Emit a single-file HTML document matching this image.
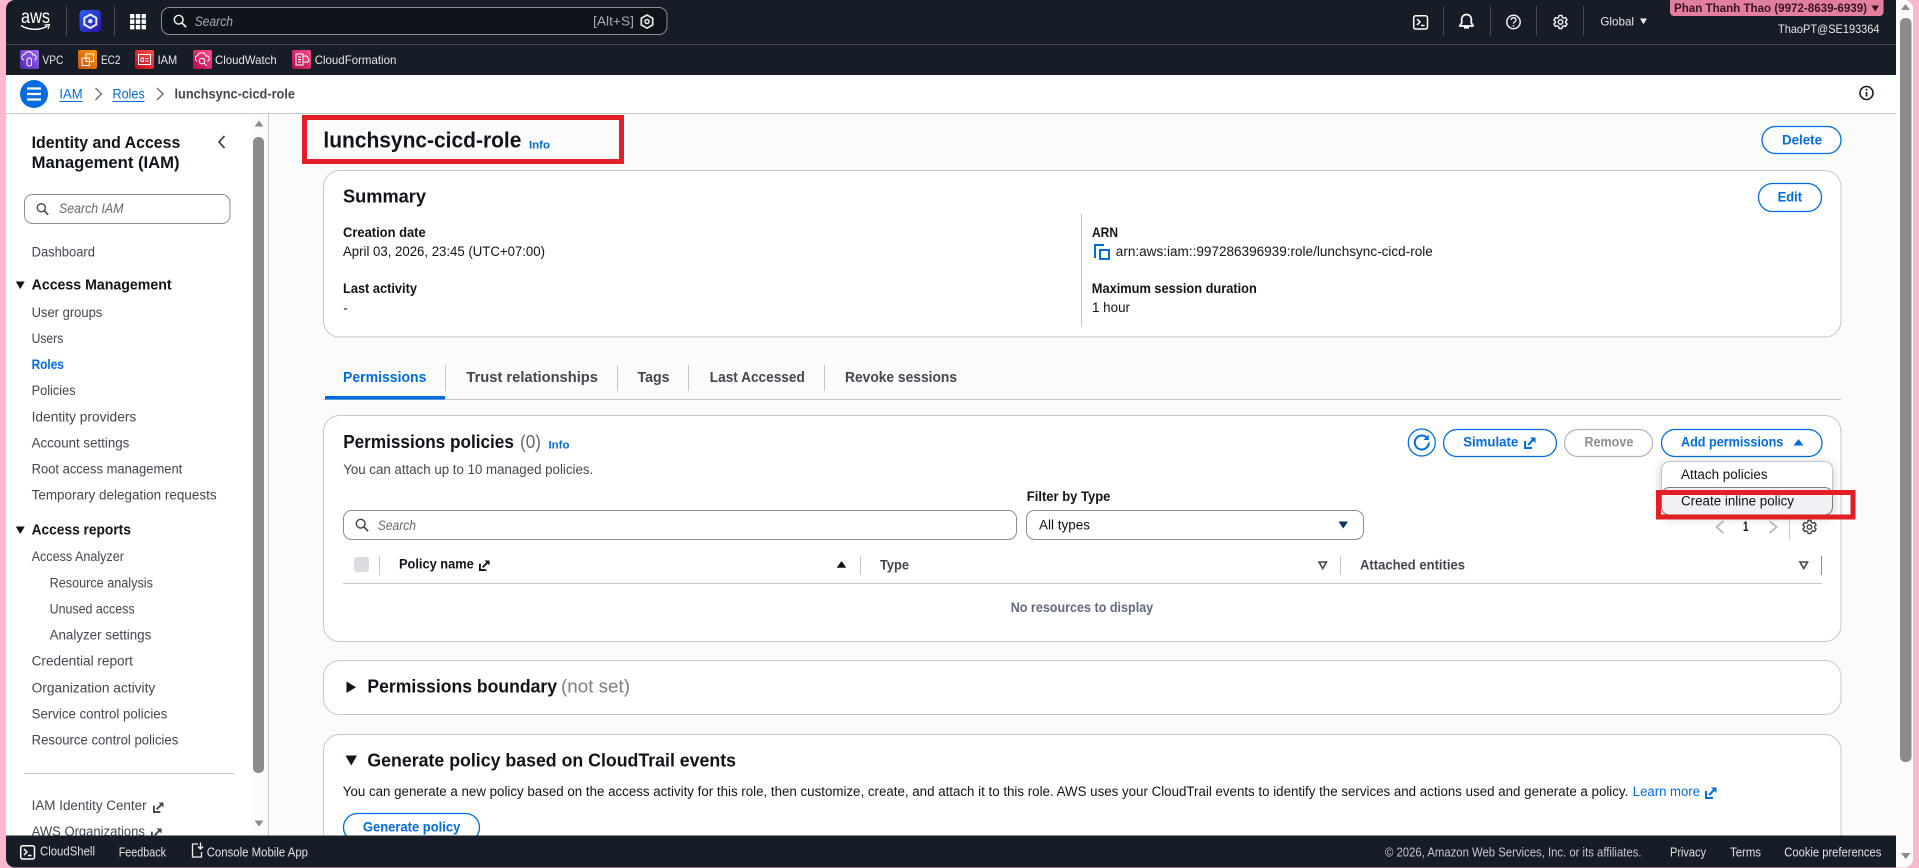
<!DOCTYPE html>
<html lang="en"><head><meta charset="utf-8"><title>lunchsync-cicd-role - IAM</title>
<style>
html,body{margin:0;padding:0;width:1919px;height:868px;overflow:hidden;background:#ffb6cf}
svg{display:block}
text{font-family:"Liberation Sans",Arial,sans-serif;font-size:13.5px;fill:#0f141a;white-space:pre}
.s{fill:#424650}
.b{font-weight:700}
.l{fill:#006ce0}
.h{font-size:18.5px;font-weight:700}
.n{font-size:12px;fill:#e6e6ea}
.g{fill:#5f6b7a}
.f{font-size:12.5px;fill:#dfe0e4}
.i{font-style:italic}
.ln{fill:none;stroke:#c6c6cd;stroke-width:1}
.card{fill:#fff;stroke:#c6c6cd;stroke-width:1}
.btn{fill:#fff;stroke:#006ce0;stroke-width:1.3}
</style></head><body>
<svg xmlns="http://www.w3.org/2000/svg" width="1919" height="868" viewBox="0 0 1919 868">
<defs>
<symbol id="ext" viewBox="0 0 12 12" overflow="visible"><path d="M1 4v7h7" fill="none" stroke="currentColor" stroke-width="2"/><path d="M4 8L10 2" fill="none" stroke="currentColor" stroke-width="2"/><path d="M6 .5h5.5V6z" fill="currentColor"/></symbol>
<symbol id="gear" viewBox="0 0 16 16" overflow="visible"><path d="M6.5 1h3l.4 2 1.7 1 1.9-.7 1.5 2.6-1.5 1.3v1.6l1.5 1.3-1.5 2.6-1.9-.7-1.7 1-.4 2h-3l-.4-2-1.7-1-1.9.7L1 10.1l1.5-1.3V7.2L1 5.9l1.5-2.6 1.9.7 1.7-1z" fill="none" stroke="currentColor" stroke-width="1.5" stroke-linejoin="round"/><circle cx="8" cy="8" r="2.4" fill="none" stroke="currentColor" stroke-width="1.5"/></symbol>
<symbol id="mag" viewBox="0 0 16 16" overflow="visible"><circle cx="6.5" cy="6.5" r="5" fill="none" stroke="currentColor" stroke-width="1.7"/><path d="M10.2 10.2L15 15" stroke="currentColor" stroke-width="1.9" fill="none"/></symbol>
<linearGradient id="gp" x1="0" y1="1" x2="1" y2="0"><stop offset="0" stop-color="#4d27aa"/><stop offset="1" stop-color="#a166ff"/></linearGradient>
<linearGradient id="go" x1="0" y1="1" x2="1" y2="0"><stop offset="0" stop-color="#c8511b"/><stop offset="1" stop-color="#ff9900"/></linearGradient>
<linearGradient id="gr" x1="0" y1="1" x2="1" y2="0"><stop offset="0" stop-color="#bd0816"/><stop offset="1" stop-color="#ff5252"/></linearGradient>
<linearGradient id="gk" x1="0" y1="1" x2="1" y2="0"><stop offset="0" stop-color="#b0084d"/><stop offset="1" stop-color="#ff4f8b"/></linearGradient>
<linearGradient id="gb" x1="0" y1="0" x2="1" y2="1"><stop offset="0" stop-color="#2a5ff0"/><stop offset="1" stop-color="#2a10a8"/></linearGradient>
<clipPath id="frame"><rect x="6" y="0" width="1907" height="867.5" rx="9"/></clipPath>
</defs>

<rect width="1919" height="868" fill="#ffb6cf"/>
<g clip-path="url(#frame)">
<rect x="6" y="0" width="1907" height="868" fill="#fcfcfd"/>

<!-- main -->
<rect x="269" y="114" width="1627" height="722" fill="#fbfbfc"/>

<!-- heading -->
<text x="323.4" y="147.7" style="font-size:22px;font-weight:700" textLength="198" lengthAdjust="spacingAndGlyphs">lunchsync-cicd-role</text>
<text x="529" y="148.3" class="l b" style="font-size:11px" textLength="21" lengthAdjust="spacingAndGlyphs">Info</text>
<rect x="1762" y="126.5" width="79" height="27" rx="13.5" class="btn"/>
<text x="1782" y="144.3" class="l b" textLength="40" lengthAdjust="spacingAndGlyphs">Delete</text>

<!-- summary card -->
<rect x="323.5" y="170.5" width="1517.5" height="166.5" rx="16" class="card"/>
<text x="343" y="202.7" class="h" textLength="83" lengthAdjust="spacingAndGlyphs">Summary</text>
<rect x="1758.5" y="183.5" width="63" height="28" rx="14" class="btn"/>
<text x="1777.6" y="201.3" class="l b" textLength="24.5" lengthAdjust="spacingAndGlyphs">Edit</text>
<text x="343" y="236.8" class="b" textLength="82.7" lengthAdjust="spacingAndGlyphs">Creation date</text>
<text x="343" y="256.2" textLength="202" lengthAdjust="spacingAndGlyphs">April 03, 2026, 23:45 (UTC+07:00)</text>
<text x="343" y="292.9" class="b" textLength="74" lengthAdjust="spacingAndGlyphs">Last activity</text>
<text x="343.3" y="312.6">-</text>
<path d="M1081.5 214v113" class="ln"/>
<text x="1092" y="236.8" class="b" textLength="26" lengthAdjust="spacingAndGlyphs">ARN</text>
<path d="M1095 258v-13h9" fill="none" stroke="#006ce0" stroke-width="2"/><rect x="1100" y="250" width="9" height="9" fill="none" stroke="#006ce0" stroke-width="2"/>
<text x="1115.8" y="256.2" textLength="317" lengthAdjust="spacingAndGlyphs">arn:aws:iam::997286396939:role/lunchsync-cicd-role</text>
<text x="1091.8" y="292.9" class="b" textLength="165" lengthAdjust="spacingAndGlyphs">Maximum session duration</text>
<text x="1092" y="312.2" textLength="38" lengthAdjust="spacingAndGlyphs">1 hour</text>

<!-- tabs -->
<text x="343" y="382.2" class="l b" style="font-size:14.5px" textLength="83.4" lengthAdjust="spacingAndGlyphs">Permissions</text>
<text x="466.4" y="382.2" class="s b" style="font-size:14.5px" textLength="131.6" lengthAdjust="spacingAndGlyphs">Trust relationships</text>
<text x="637.5" y="382.2" class="s b" style="font-size:14.5px" textLength="32" lengthAdjust="spacingAndGlyphs">Tags</text>
<text x="709.8" y="382.2" class="s b" style="font-size:14.5px" textLength="95" lengthAdjust="spacingAndGlyphs">Last Accessed</text>
<text x="845" y="382.2" class="s b" style="font-size:14.5px" textLength="112" lengthAdjust="spacingAndGlyphs">Revoke sessions</text>
<path d="M445.5 365v26M617.5 365v26M688.5 365v26M824.5 365v26" class="ln"/>
<path d="M323 399.5h1518" class="ln"/>
<rect x="325" y="396" width="120" height="3.5" fill="#006ce0"/>

<!-- permissions card -->
<rect x="323.5" y="415.5" width="1517.5" height="226" rx="16" class="card"/>
<text x="343.2" y="448" class="h" textLength="170.7" lengthAdjust="spacingAndGlyphs">Permissions policies</text>
<text x="520" y="448" class="s" style="font-size:18.5px;fill:#656871" textLength="21" lengthAdjust="spacingAndGlyphs">(0)</text>
<text x="548.5" y="448.3" class="l b" style="font-size:11px" textLength="21" lengthAdjust="spacingAndGlyphs">Info</text>
<text x="343.2" y="474" class="s" textLength="250" lengthAdjust="spacingAndGlyphs">You can attach up to 10 managed policies.</text>

<circle cx="1421.8" cy="442.5" r="13.5" fill="#fff" stroke="#006ce0" stroke-width="1.3"/>
<path d="M1427.3 438.2a7 7 0 1 0 1.5 4.3" fill="none" stroke="#006ce0" stroke-width="2"/><path d="M1428.8 434.6v5.4h-5.4z" fill="#006ce0"/>
<rect x="1443.5" y="429.5" width="113" height="27" rx="13.5" class="btn"/>
<text x="1463.2" y="446.7" class="l b" textLength="55" lengthAdjust="spacingAndGlyphs">Simulate</text>
<use href="#ext" x="1524" y="437" width="12" height="12" style="color:#006ce0"/>
<rect x="1564.5" y="429.5" width="88" height="27" rx="13.5" fill="#fff" stroke="#b4b4bb" stroke-width="1.2"/>
<text x="1584.5" y="446.7" class="b" style="fill:#8c8c94" textLength="48.8" lengthAdjust="spacingAndGlyphs">Remove</text>
<rect x="1661.5" y="429.5" width="160.5" height="27" rx="13.5" class="btn"/>
<text x="1681" y="446.7" class="l b" textLength="102.3" lengthAdjust="spacingAndGlyphs">Add permissions</text>
<path d="M1798.5 439l5 6.5h-10z" fill="#006ce0"/>

<rect x="343.5" y="510.5" width="673" height="29" rx="8" fill="#fff" stroke="#8c8c94" stroke-width="1"/>
<use href="#mag" x="355" y="518" width="14" height="14" style="color:#424650"/>
<text x="377.8" y="530" class="i" style="fill:#656871" textLength="38.2" lengthAdjust="spacingAndGlyphs">Search</text>
<text x="1026.8" y="501" class="b" textLength="83.6" lengthAdjust="spacingAndGlyphs">Filter by Type</text>
<rect x="1026.5" y="510.5" width="337" height="29" rx="8" fill="#fff" stroke="#8c8c94" stroke-width="1"/>
<text x="1039" y="529.3" textLength="51" lengthAdjust="spacingAndGlyphs">All types</text>
<path d="M1338.5 521.5h9.5l-4.75 7z" fill="#033160"/>

<!-- pagination -->
<path d="M1723.5 521l-7 6 7 6" fill="none" stroke="#b4b4bb" stroke-width="1.7"/>
<text x="1743" y="531" class="b" textLength="5.5" lengthAdjust="spacingAndGlyphs">1</text>
<path d="M1769.5 521l7 6-7 6" fill="none" stroke="#b4b4bb" stroke-width="1.7"/>
<path d="M1789.5 518v21" class="ln"/>
<use href="#gear" x="1802" y="519.5" width="15" height="15" style="color:#424650"/>

<!-- table header -->
<rect x="354" y="557" width="15" height="15" rx="3" fill="#dbdbe0"/>
<path d="M379.5 556v19M860.5 556v19M1340.5 556v19" class="ln"/>
<path d="M1821.5 556v19" fill="none" stroke="#8c8c94"/>
<text x="399" y="568.7" class="b" textLength="74.8" lengthAdjust="spacingAndGlyphs">Policy name</text>
<use href="#ext" x="479" y="560" width="11" height="11" style="color:#0f141a"/>
<path d="M841.5 561l4.8 6.8h-9.6z" fill="#0f141a"/>
<text x="880" y="569.3" class="s b" textLength="29" lengthAdjust="spacingAndGlyphs">Type</text>
<path d="M1319 562h7.5l-3.75 6.5z" fill="none" stroke="#424650" stroke-width="1.6"/>
<text x="1360" y="569.3" class="s b" textLength="105" lengthAdjust="spacingAndGlyphs">Attached entities</text>
<path d="M1800 562h7.5l-3.75 6.5z" fill="none" stroke="#424650" stroke-width="1.6"/>
<path d="M343 583.5h1479" class="ln"/>
<text x="1010.7" y="612" class="b g" textLength="142.5" lengthAdjust="spacingAndGlyphs">No resources to display</text>

<!-- boundary card -->
<rect x="323.5" y="660.5" width="1517.5" height="54" rx="16" class="card"/>
<path d="M346.5 681.5l9.5 5.7-9.5 5.7z" fill="#0f141a"/>
<text x="367.4" y="692.7" class="h" textLength="189.6" lengthAdjust="spacingAndGlyphs">Permissions boundary</text>
<text x="561" y="692.7" style="font-size:18.5px;fill:#7d7d85" textLength="69" lengthAdjust="spacingAndGlyphs">(not set)</text>

<!-- generate card -->
<rect x="323.5" y="734.5" width="1517.5" height="160" rx="16" class="card"/>
<path d="M345.5 755.5h11.5l-5.75 10z" fill="#0f141a"/>
<text x="367.4" y="766.7" class="h" textLength="368.6" lengthAdjust="spacingAndGlyphs">Generate policy based on CloudTrail events</text>
<text x="342.8" y="796" textLength="1285.5" lengthAdjust="spacingAndGlyphs">You can generate a new policy based on the access activity for this role, then customize, create, and attach it to this role. AWS uses your CloudTrail events to identify the services and actions used and generate a policy.</text>
<text x="1632.8" y="796" class="l" textLength="67.2" lengthAdjust="spacingAndGlyphs">Learn more</text>
<use href="#ext" x="1705" y="787" width="12" height="12" style="color:#006ce0"/>
<rect x="343.5" y="813.5" width="136" height="28" rx="14" class="btn"/>
<text x="362.9" y="831.7" class="l b" textLength="97.4" lengthAdjust="spacingAndGlyphs">Generate policy</text>

<!-- dropdown -->
<g style="filter:drop-shadow(0 2px 5px rgba(0,0,0,.22))"><rect x="1661.5" y="461.5" width="171" height="53.5" rx="8" fill="#fff" stroke="#c6c6cd"/></g>
<rect x="1661.5" y="487.5" width="171" height="27.5" rx="8" fill="#f0f0f5" stroke="#7d7d85"/>
<text x="1681" y="479" textLength="86.6" lengthAdjust="spacingAndGlyphs">Attach policies</text>
<text x="1681" y="505.3" textLength="113" lengthAdjust="spacingAndGlyphs">Create inline policy</text>

<!-- red highlight boxes -->
<rect x="304.5" y="117.5" width="317" height="44" fill="none" stroke="#e31e26" stroke-width="5"/>
<rect x="1658.5" y="492.5" width="194.5" height="24.500" fill="none" stroke="#e31e26" stroke-width="5"/>

<!-- sidebar -->
<rect x="6" y="114" width="262" height="722" fill="#fff"/>
<path d="M268.5 114v722" class="ln"/>
<rect x="251" y="114" width="17" height="722" fill="#fcfcfc"/>
<path d="M259 120.5l4.500 6h-9z" fill="#8c8c8c"/>
<rect x="253" y="137" width="11" height="636" rx="5" fill="#8c8c8c"/>
<path d="M254.5 820.5h9l-4.500 6z" fill="#8c8c8c"/>

<g transform="translate(-.4,-.5)">
<text x="32" y="148.7" style="font-size:16.5px;font-weight:700" textLength="148.7" lengthAdjust="spacingAndGlyphs">Identity and Access</text>
<text x="32" y="168.7" style="font-size:16.5px;font-weight:700" textLength="148" lengthAdjust="spacingAndGlyphs">Management (IAM)</text>
</g>
<path d="M224.5 136l-5.5 6 5.5 6" fill="none" stroke="#424650" stroke-width="1.7"/>
<rect x="24.5" y="194.5" width="205.5" height="29" rx="8" fill="#fff" stroke="#8c8c94"/>
<use href="#mag" x="36" y="202.5" width="13" height="13" style="color:#424650"/>
<text x="59" y="213" class="i" style="fill:#656871" textLength="64.5" lengthAdjust="spacingAndGlyphs">Search IAM</text>
<g transform="translate(-.4,-.5)">
<text x="32" y="257" class="s" textLength="63.3" lengthAdjust="spacingAndGlyphs">Dashboard</text>
<text x="32" y="290" class="b" style="font-size:14.5px" textLength="140" lengthAdjust="spacingAndGlyphs">Access Management</text>
<text x="32" y="317.5" class="s" textLength="70.7" lengthAdjust="spacingAndGlyphs">User groups</text>
<text x="32" y="343.3" class="s" textLength="31.7" lengthAdjust="spacingAndGlyphs">Users</text>
<text x="32" y="369.3" class="l b" textLength="32.3" lengthAdjust="spacingAndGlyphs">Roles</text>
<text x="32" y="395.3" class="s" textLength="44" lengthAdjust="spacingAndGlyphs">Policies</text>
<text x="32" y="422" class="s" textLength="104.7" lengthAdjust="spacingAndGlyphs">Identity providers</text>
<text x="32" y="448" class="s" textLength="97.7" lengthAdjust="spacingAndGlyphs">Account settings</text>
<text x="32" y="474" class="s" textLength="150.7" lengthAdjust="spacingAndGlyphs">Root access management</text>
<text x="32" y="500" class="s" textLength="185" lengthAdjust="spacingAndGlyphs">Temporary delegation requests</text>
<text x="32" y="535" class="b" style="font-size:14.5px" textLength="99.3" lengthAdjust="spacingAndGlyphs">Access reports</text>
<text x="32" y="561.3" class="s" textLength="92.3" lengthAdjust="spacingAndGlyphs">Access Analyzer</text>
<text x="50" y="588" class="s" textLength="103.3" lengthAdjust="spacingAndGlyphs">Resource analysis</text>
<text x="50" y="614" class="s" textLength="85" lengthAdjust="spacingAndGlyphs">Unused access</text>
<text x="50" y="640" class="s" textLength="101.7" lengthAdjust="spacingAndGlyphs">Analyzer settings</text>
<text x="32" y="666" class="s" textLength="101.3" lengthAdjust="spacingAndGlyphs">Credential report</text>
<text x="32" y="693" class="s" textLength="123.7" lengthAdjust="spacingAndGlyphs">Organization activity</text>
<text x="32" y="719" class="s" textLength="135.7" lengthAdjust="spacingAndGlyphs">Service control policies</text>
<text x="32" y="745" class="s" textLength="146.7" lengthAdjust="spacingAndGlyphs">Resource control policies</text>
<text x="32" y="810.7" class="s" textLength="115" lengthAdjust="spacingAndGlyphs">IAM Identity Center</text>
<text x="32" y="836.5" class="s" textLength="113.3" lengthAdjust="spacingAndGlyphs">AWS Organizations</text>
</g>
<path d="M15.8 281.5h8.900l-4.450 7.5zM15.8 526.5h8.900l-4.450 7.5z" fill="#0f141a"/>
<path d="M24 773.5h210" class="ln"/>
<use href="#ext" x="153" y="802" width="11" height="11" style="color:#424650"/>
<use href="#ext" x="151" y="828" width="11" height="11" style="color:#424650"/>

<!-- breadcrumb bar -->
<rect x="6" y="75" width="1890" height="38.5" fill="#fff"/>
<path d="M6 113.5h1890" class="ln"/>
<circle cx="34" cy="94" r="14" fill="#006ce0"/>
<path d="M27 88.5h14M27 94h14M27 99.5h14" stroke="#fff" stroke-width="2.2" fill="none"/>
<text x="59.4" y="98.5" class="l" textLength="23.2" lengthAdjust="spacingAndGlyphs">IAM</text><path d="M59.400 101.5h23.2" stroke="#006ce0"/>
<path d="M95.5 88l6 6-6 6" fill="none" stroke="#656871" stroke-width="1.3"/>
<text x="112.5" y="98.5" class="l" textLength="32.1" lengthAdjust="spacingAndGlyphs">Roles</text><path d="M112.500 101.5h32.1" stroke="#006ce0"/>
<path d="M157 88l6 6-6 6" fill="none" stroke="#656871" stroke-width="1.3"/>
<text x="174.500" y="98.500" class="s b" textLength="120.500" lengthAdjust="spacingAndGlyphs">lunchsync-cicd-role</text>
<circle cx="1866.500" cy="93" r="6.500" fill="none" stroke="#161d26" stroke-width="1.600"/><path d="M1866.500 92v4.500M1866.500 88.700v1.800" stroke="#161d26" stroke-width="1.800"/>

<!-- top nav -->
<rect x="6" y="0" width="1890" height="75" fill="#161d26"/>
<path d="M6 44.500h1890" stroke="#424650" stroke-width="1"/>
<text x="21" y="23" style="font-size:19px;fill:#fff" textLength="29" lengthAdjust="spacingAndGlyphs">aws</text>
<path d="M21 25.500c8 5 19 5 26.500 .5" fill="none" stroke="#fff" stroke-width="1.500"/><path d="M44.500 25.200l5-.7-1.500 4.500" fill="none" stroke="#fff" stroke-width="1.200"/>
<path d="M66.500 6v30M114.500 6v30M1443.500 6v30M1490.500 6v30M1536.500 6v30M1583.500 6v30" stroke="#424650"/>
<rect x="79.500" y="10" width="21.500" height="22" rx="4" fill="url(#gb)"/>
<path d="M90.300 14.500l6 3.500v6.500l-6 3.500-6-3.500V18z" fill="none" stroke="#e8ecff" stroke-width="2"/><circle cx="90.300" cy="21.200" r="2.200" fill="#e8ecff"/>
<g fill="#fff"><rect x="130" y="14" width="4.400" height="4.400" rx=".5"/><rect x="135.800" y="14" width="4.400" height="4.400" rx=".5"/><rect x="141.600" y="14" width="4.400" height="4.400" rx=".5"/><rect x="130" y="19.500" width="4.400" height="4.400" rx=".5"/><rect x="135.800" y="19.500" width="4.400" height="4.400" rx=".5"/><rect x="141.600" y="19.500" width="4.400" height="4.400" rx=".5"/><rect x="130" y="25" width="4.400" height="4.400" rx=".5"/><rect x="135.800" y="25" width="4.400" height="4.400" rx=".5"/><rect x="141.600" y="25" width="4.400" height="4.400" rx=".5"/></g>
<rect x="161.500" y="7.500" width="505.500" height="27" rx="8" fill="#0f141a" stroke="#8c8c94"/>
<use href="#mag" x="173" y="14" width="14" height="14" style="color:#f0f0f4"/>
<text x="194.600" y="26" class="i" style="fill:#a8a8b0" textLength="38.400" lengthAdjust="spacingAndGlyphs">Search</text>
<text x="593" y="25.500" style="font-size:12.500px;fill:#a8a8b0" textLength="41" lengthAdjust="spacingAndGlyphs">[Alt+S]</text>
<path d="M647 15l5.700 3.300v6.600l-5.700 3.300-5.700-3.300v-6.600z" fill="none" stroke="#e8e8ec" stroke-width="1.700"/><circle cx="647" cy="21.500" r="2" fill="none" stroke="#e8e8ec" stroke-width="1.500"/>

<rect x="1413.700" y="15.700" width="13.800" height="13.300" rx="2" fill="none" stroke="#fff" stroke-width="1.500"/><path d="M1417 19l3 3-3 3M1421 25.500h3.500" fill="none" stroke="#fff" stroke-width="1.500"/>
<path d="M1466.500 14.500c-3 0-4.800 2.200-4.800 5v3.500l-2 3h13.600l-2-3v-3.500c0-2.800-1.800-5-4.800-5z" fill="none" stroke="#fff" stroke-width="1.700" stroke-linejoin="round"/><path d="M1464 27.500h5" stroke="#fff" stroke-width="2.200"/>
<circle cx="1513.500" cy="22" r="6.700" fill="none" stroke="#f0f0f4" stroke-width="1.500"/><path d="M1511 20c.2-3 5-3 5 0 0 1.800-2.500 1.800-2.500 3.600M1513.500 25v1.500" fill="none" stroke="#f0f0f4" stroke-width="1.400"/>
<use href="#gear" x="1553" y="14.500" width="15" height="15" style="color:#f0f0f4"/>
<text x="1600.400" y="25.500" class="n" textLength="33.600" lengthAdjust="spacingAndGlyphs">Global</text>
<path d="M1640 18.500h7l-3.500 5.800z" fill="#f0f0f4"/>
<path d="M1670 0h213.500v12a4 4 0 0 1-4 4H1674a4 4 0 0 1-4-4z" fill="#e27f9f"/>
<text x="1674" y="12" class="b" style="font-size:11.500px;fill:#38141f" textLength="193" lengthAdjust="spacingAndGlyphs">Phan Thanh Thao (9972-8639-6939)</text>
<path d="M1871.500 5.500h7.500l-3.750 6z" fill="#38141f"/>
<text x="1778" y="33" class="n" textLength="101.500" lengthAdjust="spacingAndGlyphs">ThaoPT@SE193364</text>

<!-- services -->
<rect x="20" y="50" width="19" height="19" rx="2" fill="url(#gp)"/>
<path d="M24 60a2.800 2.800 0 0 1 .5-5.500 4.500 4.500 0 0 1 8.500 .5 2.600 2.600 0 0 1 1.500 5" fill="none" stroke="#fff" stroke-width="1"/><rect x="27" y="58" width="4.500" height="8" rx="2" fill="none" stroke="#fff" stroke-width="1"/>
<text x="42.400" y="64" class="n" textLength="21" lengthAdjust="spacingAndGlyphs">VPC</text>
<rect x="78" y="50" width="19" height="19" rx="2" fill="url(#go)"/>
<rect x="86" y="54" width="7.500" height="7.500" fill="none" stroke="#fff" stroke-width="1"/><rect x="82" y="58" width="7.500" height="7.500" fill="none" stroke="#fff" stroke-width="1"/>
<text x="101" y="64" class="n" textLength="19.500" lengthAdjust="spacingAndGlyphs">EC2</text>
<rect x="135" y="50" width="19" height="19" rx="2" fill="url(#gr)"/>
<rect x="138.500" y="54.500" width="12" height="10" fill="none" stroke="#fff" stroke-width="1"/><path d="M141 58h2.500v3.500H141zM145 58.500h3.500M145 61h3.500" fill="none" stroke="#fff" stroke-width=".9"/>
<text x="157.600" y="64" class="n" textLength="19.600" lengthAdjust="spacingAndGlyphs">IAM</text>
<rect x="193" y="50" width="19" height="19" rx="2" fill="url(#gk)"/>
<path d="M197 61a3 3 0 0 1 .5-5.500 4.500 4.500 0 0 1 8.500 .5 2.600 2.600 0 0 1 1.500 5" fill="none" stroke="#fff" stroke-width="1"/><circle cx="202" cy="61" r="2.800" fill="none" stroke="#fff" stroke-width="1"/><path d="M204 63l3 3" stroke="#fff" stroke-width="1"/>
<text x="215" y="64" class="n" textLength="61.700" lengthAdjust="spacingAndGlyphs">CloudWatch</text>
<rect x="292" y="50" width="19" height="19" rx="2" fill="url(#gk)"/>
<path d="M296 54h7v11h-7zM298 57h3M298 59.500h3M298 62h3" fill="none" stroke="#fff" stroke-width="1"/><path d="M303 57a2.800 2.800 0 0 1 5 1.500 2 2 0 0 1 0 3.500h-5" fill="none" stroke="#fff" stroke-width="1"/>
<text x="314.700" y="64" class="n" textLength="81.700" lengthAdjust="spacingAndGlyphs">CloudFormation</text>

<!-- footer -->
<rect x="6" y="835.500" width="1890" height="33" fill="#161d26"/>
<rect x="20.700" y="845.700" width="13.800" height="13.300" rx="2" fill="none" stroke="#fff" stroke-width="1.500"/><path d="M24 849l3 3-3 3M28 855.500h3.500" fill="none" stroke="#fff" stroke-width="1.500"/>
<text x="40" y="855.300" class="f" textLength="55" lengthAdjust="spacingAndGlyphs">CloudShell</text>
<text x="118.700" y="856.500" class="f" textLength="47.300" lengthAdjust="spacingAndGlyphs">Feedback</text>
<path d="M198 844h-5.500v13h9v-5" fill="none" stroke="#f0f0f4" stroke-width="1.300"/><path d="M200.500 842.500v6M198 846.500l2.500 2.500 2.500-2.500" fill="none" stroke="#f0f0f4" stroke-width="1.300"/>
<text x="206.700" y="856.500" class="f" textLength="101.300" lengthAdjust="spacingAndGlyphs">Console Mobile App</text>
<text x="1385" y="856.700" class="f" style="fill:#c6c6cd" textLength="256.500" lengthAdjust="spacingAndGlyphs">© 2026, Amazon Web Services, Inc. or its affiliates.</text>
<text x="1670" y="856.700" class="f" textLength="36" lengthAdjust="spacingAndGlyphs">Privacy</text>
<text x="1730" y="856.700" class="f" textLength="31" lengthAdjust="spacingAndGlyphs">Terms</text>
<text x="1784.300" y="856.700" class="f" textLength="97" lengthAdjust="spacingAndGlyphs">Cookie preferences</text>

<!-- outer scrollbar -->
<rect x="1896" y="0" width="17" height="868" fill="#fcfcfc"/>
<path d="M1905.500 4l4.500 6h-9z" fill="#8c8c8c"/>
<rect x="1900" y="18" width="11.500" height="744" rx="5" fill="#8c8c8c"/>
<path d="M1901 853h9.500l-4.750 6z" fill="#8c8c8c"/>
</g>
</svg>
</body></html>
